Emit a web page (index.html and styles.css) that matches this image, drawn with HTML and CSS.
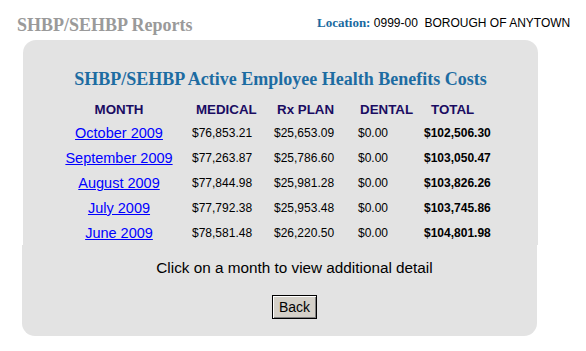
FILE: index.html
```html
<!DOCTYPE html>
<html>
<head>
<meta charset="utf-8">
<title>SHBP/SEHBP Reports</title>
<link rel="stylesheet" href="styles.css">
</head>
<body>
<div class="page">
  <header class="top">
    <div class="brand">SHBP/SEHBP Reports</div>
    <div class="loc"><span class="loc-label">Location:</span> 0999-00&nbsp; BOROUGH OF ANYTOWN</div>
  </header>
  <section class="panel-top">
    <h1 class="title">SHBP/SEHBP Active Employee Health Benefits Costs</h1>
    <div class="grid">
      <div class="th c1">MONTH</div>
      <div class="th c2">MEDICAL</div>
      <div class="th c3">Rx PLAN</div>
      <div class="th c4">DENTAL</div>
      <div class="th c5">TOTAL</div>

      <div class="td c1"><a href="#">October 2009</a></div>
      <div class="td c2">$76,853.21</div>
      <div class="td c3">$25,653.09</div>
      <div class="td c4">$0.00</div>
      <div class="td c5">$102,506.30</div>

      <div class="td c1"><a href="#">September 2009</a></div>
      <div class="td c2">$77,263.87</div>
      <div class="td c3">$25,786.60</div>
      <div class="td c4">$0.00</div>
      <div class="td c5">$103,050.47</div>

      <div class="td c1"><a href="#">August 2009</a></div>
      <div class="td c2">$77,844.98</div>
      <div class="td c3">$25,981.28</div>
      <div class="td c4">$0.00</div>
      <div class="td c5">$103,826.26</div>

      <div class="td c1"><a href="#">July 2009</a></div>
      <div class="td c2">$77,792.38</div>
      <div class="td c3">$25,953.48</div>
      <div class="td c4">$0.00</div>
      <div class="td c5">$103,745.86</div>

      <div class="td c1"><a href="#">June 2009</a></div>
      <div class="td c2">$78,581.48</div>
      <div class="td c3">$26,220.50</div>
      <div class="td c4">$0.00</div>
      <div class="td c5">$104,801.98</div>
    </div>
  </section>
  <section class="panel-bottom">
    <p class="note">Click on a month to view additional detail</p>
    <button class="back" type="button">Back</button>
  </section>
</div>
</body>
</html>
```
FILE: styles.css
```css
html, body {
  margin: 0;
  padding: 0;
  background: #ffffff;
}

.page {
  width: 586px;
}

.top {
  display: flex;
  align-items: flex-start;
  height: 40px;
  box-sizing: border-box;
  padding: 16px 0 0 17px;
}

.brand {
  width: 300px;
  font-family: "Liberation Serif", serif;
  font-weight: bold;
  font-size: 18px;
  line-height: 18px;
  color: #9a9a9a;
}

.loc {
  font-family: "Liberation Sans", Arial, sans-serif;
  font-size: 12px;
  line-height: 14px;
  color: #000;
  white-space: nowrap;
}

.loc-label {
  font-family: "Liberation Serif", serif;
  font-weight: bold;
  font-size: 13px;
  color: #1a6aa0;
}

.panel-top {
  margin-left: 23px;
  width: 515px;
  box-sizing: border-box;
  background: #e3e3e3;
  border-radius: 13px 13px 0 0;
  padding: 28px 0 0 32px;
}

.title {
  margin: 0 0 9px -32px;
  width: 515px;
  text-align: center;
  font-family: "Liberation Serif", serif;
  font-weight: bold;
  font-size: 18px;
  line-height: 22px;
  color: #1d6ca2;
}

.grid {
  display: grid;
  grid-template-columns: 128px 87px 72px 78px 80px;
  grid-template-rows: 22px repeat(4, 25px) 24px;
}

.th {
  font-family: "Liberation Sans", Arial, sans-serif;
  font-weight: bold;
  font-size: 13.33px;
  line-height: 22px;
  color: #1a0c62;
  white-space: nowrap;
}

.td {
  font-family: "Liberation Sans", Arial, sans-serif;
  font-size: 12px;
  line-height: 25px;
  color: #000;
  white-space: nowrap;
}

.c1 { text-align: center; }
.th.c2 { padding-left: 13px; }
.th.c3 { padding-left: 7px; }
.th.c4 { padding-left: 18px; }
.th.c5 { padding-left: 11px; }
.td.c2 { padding-left: 9px; }
.td.c3 { padding-left: 4px; }
.td.c4 { padding-left: 16px; }
.td.c5 { padding-left: 4px; font-weight: bold; }

.td.c1 a {
  font-size: 14.5px;
  color: #0000ff;
  text-decoration: underline;
}

.panel-bottom {
  margin-left: 22px;
  width: 515px;
  box-sizing: border-box;
  background: #e3e3e3;
  border-radius: 0 0 13px 13px;
  padding: 14px 0 17px 30px;
  text-align: center;
}

.note {
  margin: 0 0 18px 0;
  font-family: "Liberation Sans", Arial, sans-serif;
  font-size: 15.3px;
  line-height: 18px;
  color: #000;
}

.back {
  display: inline-block;
  width: 45px;
  height: 24px;
  margin: 0;
  padding: 0;
  font-family: "Liberation Sans", Arial, sans-serif;
  font-size: 14px;
  color: #000;
  background: #d4d0c8;
  border: 1px solid #000;
  box-shadow: inset 1px 1px 0 #ffffff, inset -1px -1px 0 #808080;
  vertical-align: top;
}
```
